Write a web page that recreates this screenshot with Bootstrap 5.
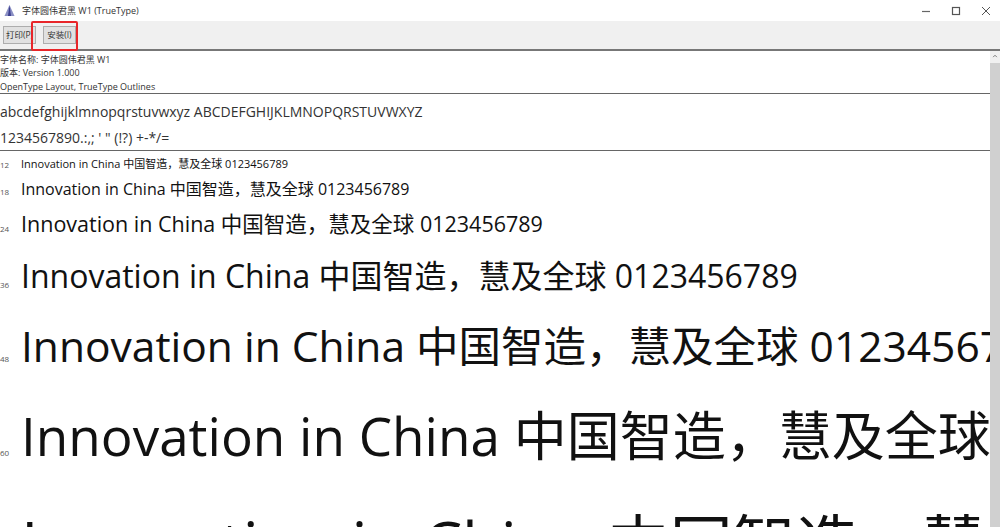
<!DOCTYPE html>
<html lang="zh">
<head>
  <meta charset="UTF-8" />
  <title>字体圆伟君黑 W1 (TrueType)</title>
  <link href="https://cdn.jsdelivr.net/npm/bootstrap@5.3.0/dist/css/bootstrap.min.css" rel="stylesheet" />
  <style>
    html, body { height: 527px; overflow: hidden; background: #fff; }
    body { font-family: "Open Sans", "Noto Sans CJK SC", sans-serif; color: #222; }
    .title-bar { height: 21px; padding-left: 3px; font-size: 9px; color: #333; }
    .title-bar span { margin-left: 6px; }
    .win-btns { gap: 20px; padding-right: 9px; }
    .tool-bar { height: 30px; background: #f0f0f0; border-bottom: 2px solid #777; padding-left: 3px; gap: 4px; position: relative; }
    .tool-btn { height: 18px; padding: 0 2px; font-size: 8.5px; line-height: 16px; background: #e1e1e1; border: 1px solid #adadad; color: #333; }
    .tool-btn.second { margin-left: 3px; padding: 0 3px; }
    .red-box { position: absolute; left: 31px; top: 0; width: 47px; height: 30px; border: 2px solid #e8262a; border-radius: 2px; }
    .view-area { position: relative; height: 476px; overflow: hidden; }
    .font-panel { width: 990px; overflow: hidden; white-space: nowrap; }
    .meta-lines { font-size: 9px; line-height: 13.3px; color: #333; padding-top: 2px; height: 43px; border-bottom: 1px solid #666; }
    .glyph-lines { height: 57px; border-bottom: 1px solid #666; font-size: 14px; color: #333; line-height: 26px; padding-top: 5px; }
    .sample-row { align-items: baseline; }
    .sample-row .num { width: 21px; flex: none; font-size: 8px; color: #555; }
    .sample-row .txt { color: #111; }
    .s12 { font-size: 11px; height: 19px; margin-top: 5px; }
    .s18 { font-size: 16px; height: 29px; margin-top: 2px; }
    .s24 { font-size: 21.5px; height: 44px; margin-top: 2px; }
    .s36 { font-size: 32px; height: 62px; }
    .s48 { font-size: 42.5px; height: 82px; }
    .s60 { font-size: 53px; height: 100px; }
    .s72 { font-size: 63px; height: 80px; }
    .scroll-track { position: absolute; right: 0; top: 0; bottom: 0; width: 10px; background: #d0d0d0; }
    .scroll-up { height: 12px; background: #f0f0f0; }
    .scroll-up svg { display: block; margin: auto; padding-top: 3px; }
  </style>
</head>
<body>
  <div class="title-bar d-flex align-items-center justify-content-between">
    <div class="d-flex align-items-center">
      <svg width="13" height="13" viewBox="0 0 13 13"><path d="M6.5 1 L1.5 12 H11.5 Z" fill="#8a8fc4"/><path d="M6.5 1 L5 12 H8 Z" fill="#3b3f8f"/></svg>
      <span>字体圆伟君黑 W1 (TrueType)</span>
    </div>
    <div class="d-flex align-items-center win-btns">
      <svg width="10" height="10" viewBox="0 0 10 10"><path d="M1 5.5H9" stroke="#666" stroke-width="1.2"/></svg>
      <svg width="10" height="10" viewBox="0 0 10 10"><rect x="1.5" y="1.5" width="7" height="7" fill="none" stroke="#555" stroke-width="1.2"/></svg>
      <svg width="10" height="10" viewBox="0 0 10 10"><path d="M1 1L9 9M9 1L1 9" stroke="#555" stroke-width="1"/></svg>
    </div>
  </div>
  <div class="tool-bar d-flex align-items-center">
    <div class="tool-btn">打印(P)</div>
    <div class="tool-btn second">安装(I)</div>
    <div class="red-box"></div>
  </div>
  <div class="view-area">
    <div class="font-panel">
      <div class="meta-lines">
        <div>字体名称: 字体圆伟君黑 W1</div>
        <div>版本: Version 1.000</div>
        <div>OpenType Layout, TrueType Outlines</div>
      </div>
      <div class="glyph-lines">
        <div>abcdefghijklmnopqrstuvwxyz ABCDEFGHIJKLMNOPQRSTUVWXYZ</div>
        <div>1234567890.:,; ' " (!?) +-*/=</div>
      </div>
      <div class="d-flex sample-row s12"><div class="num">12</div><div class="txt">Innovation in China 中国智造，慧及全球 0123456789</div></div>
      <div class="d-flex sample-row s18"><div class="num">18</div><div class="txt">Innovation in China 中国智造，慧及全球 0123456789</div></div>
      <div class="d-flex sample-row s24"><div class="num">24</div><div class="txt">Innovation in China 中国智造，慧及全球 0123456789</div></div>
      <div class="d-flex sample-row s36"><div class="num">36</div><div class="txt">Innovation in China 中国智造，慧及全球 0123456789</div></div>
      <div class="d-flex sample-row s48"><div class="num">48</div><div class="txt">Innovation in China 中国智造，慧及全球 0123456789</div></div>
      <div class="d-flex sample-row s60"><div class="num">60</div><div class="txt">Innovation in China 中国智造，慧及全球 0123456789</div></div>
      <div class="d-flex sample-row s72"><div class="num">72</div><div class="txt">Innovation in China 中国智造，慧及全球 0123456789</div></div>
    </div>
    <div class="scroll-track">
      <div class="scroll-up"><svg width="8" height="8" viewBox="0 0 8 8"><path d="M1 5L4 2L7 5" fill="none" stroke="#555" stroke-width="1.2"/></svg></div>
    </div>
  </div>
  <script src="https://cdn.jsdelivr.net/npm/bootstrap@5.3.0/dist/js/bootstrap.bundle.min.js"></script>
</body>
</html>
